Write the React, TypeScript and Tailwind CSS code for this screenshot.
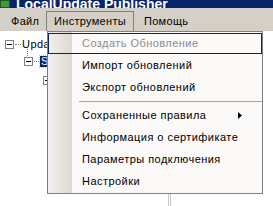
import React from "react";

const items = [
  { label: "Создать Обновление", disabled: true, active: true },
  { label: "Импорт обновлений" },
  { label: "Экспорт обновлений" },
  { sep: true },
  { label: "Сохраненные правила", sub: true },
  { label: "Информация о сертификате" },
  { label: "Параметры подключения" },
  { label: "Настройки" },
];

function PlusBox({ minus = true }: { minus?: boolean }) {
  return (
    <svg width="9" height="9" viewBox="0 0 9 9" className="shrink-0">
      <rect x="0.5" y="0.5" width="8" height="8" fill="#fff" stroke="#808080" />
      <line x1="2" y1="4.5" x2="7" y2="4.5" stroke="#000" />
      {!minus && <line x1="4.5" y1="2" x2="4.5" y2="7" stroke="#000" />}
    </svg>
  );
}

export default function App() {
  return (
    <div
      className="relative w-[273px] h-[206px] overflow-hidden bg-white text-[11px] tracking-[0.45px] text-black"
      style={{ fontFamily: '"Liberation Sans", Arial, sans-serif' }}
    >
      {/* title bar, cut at top */}
      <div className="h-[8px] overflow-hidden bg-[#0a246a] flex items-end">
        <div className="w-[10px] h-[8px] bg-[#3c9a3c] border border-[#1f5d1f] rounded-[1px]" />
        <div className="ml-[6px] -mb-[3px] text-[14px] leading-[14px] tracking-normal font-bold text-white whitespace-nowrap">
          LocalUpdate Publisher
        </div>
      </div>

      {/* menu bar */}
      <div className="h-[23px] bg-[#d4d0c8] flex items-end pl-[2px] tracking-[0.3px]">
        <div className="w-[44px] h-[20px] pl-[9px] flex items-center">Файл</div>
        <div className="w-[88px] h-[20px] flex items-center justify-center border-t border-l border-r border-[#808080]">
          Инструменты
        </div>
        <div className="h-[20px] pl-[10px] flex items-center">Помощь</div>
      </div>

      {/* tree */}
      <div className="pt-[8px] pl-[5px]">
        <div className="flex items-center h-[10px]">
          <PlusBox />
          <div className="w-[6px] border-t border-dotted border-[#808080] mx-[1px]" />
          <span className="leading-[12px]">Update</span>
        </div>
        <div className="ml-[22px] w-px h-[7px] border-l border-dotted border-[#808080]" />
        <div className="flex items-center h-[10px] ml-[19px]">
          <PlusBox />
          <div className="w-[5px] border-t border-dotted border-[#808080] mx-[1px]" />
          <span className="bg-[#0a246a] text-white px-[1px] leading-[11px] outline outline-1 outline-dotted outline-[#f0c040]">
            Server
          </span>
        </div>
        <div className="flex items-center h-[10px] ml-[38px] mt-[9px]">
          <PlusBox minus={false} />
        </div>
      </div>

      {/* splitter line under menu */}
      <div className="absolute left-[168px] top-[193px] w-[3px] h-[13px] border-l border-r border-[#c8c8c8]" />

      {/* dropdown */}
      <div className="absolute left-[47px] top-[31px] w-[216px] border border-[#808080] bg-[#fcf9f9] py-[1px]">
        <div className="absolute left-0 top-0 bottom-0 w-[24px] bg-gradient-to-r from-[#f2f0f2] to-[#ddd9d0]" />
        {items.map((it, i) =>
          it.sep ? (
            <div key={i} className="relative h-[6px] flex items-center pl-[31px]">
              <div className="flex-1 border-t border-[#a6a6a6]" />
            </div>
          ) : (
            <div
              key={i}
              className={`relative h-[22px] flex items-center pl-[34px] pr-[20px] ${
                it.active ? "border border-[#0a246a]" : ""
              } ${it.disabled ? "text-[#8d8d8d]" : ""}`}
              style={it.active ? { paddingLeft: 33, height: 21 } : undefined}
            >
              <span className="flex-1 whitespace-nowrap">{it.label}</span>
              {it.sub && (
                <svg width="4" height="7" viewBox="0 0 4 7">
                  <path d="M0 0 L4 3.5 L0 7 Z" fill="#000" />
                </svg>
              )}
            </div>
          )
        )}
      </div>
    </div>
  );
}
